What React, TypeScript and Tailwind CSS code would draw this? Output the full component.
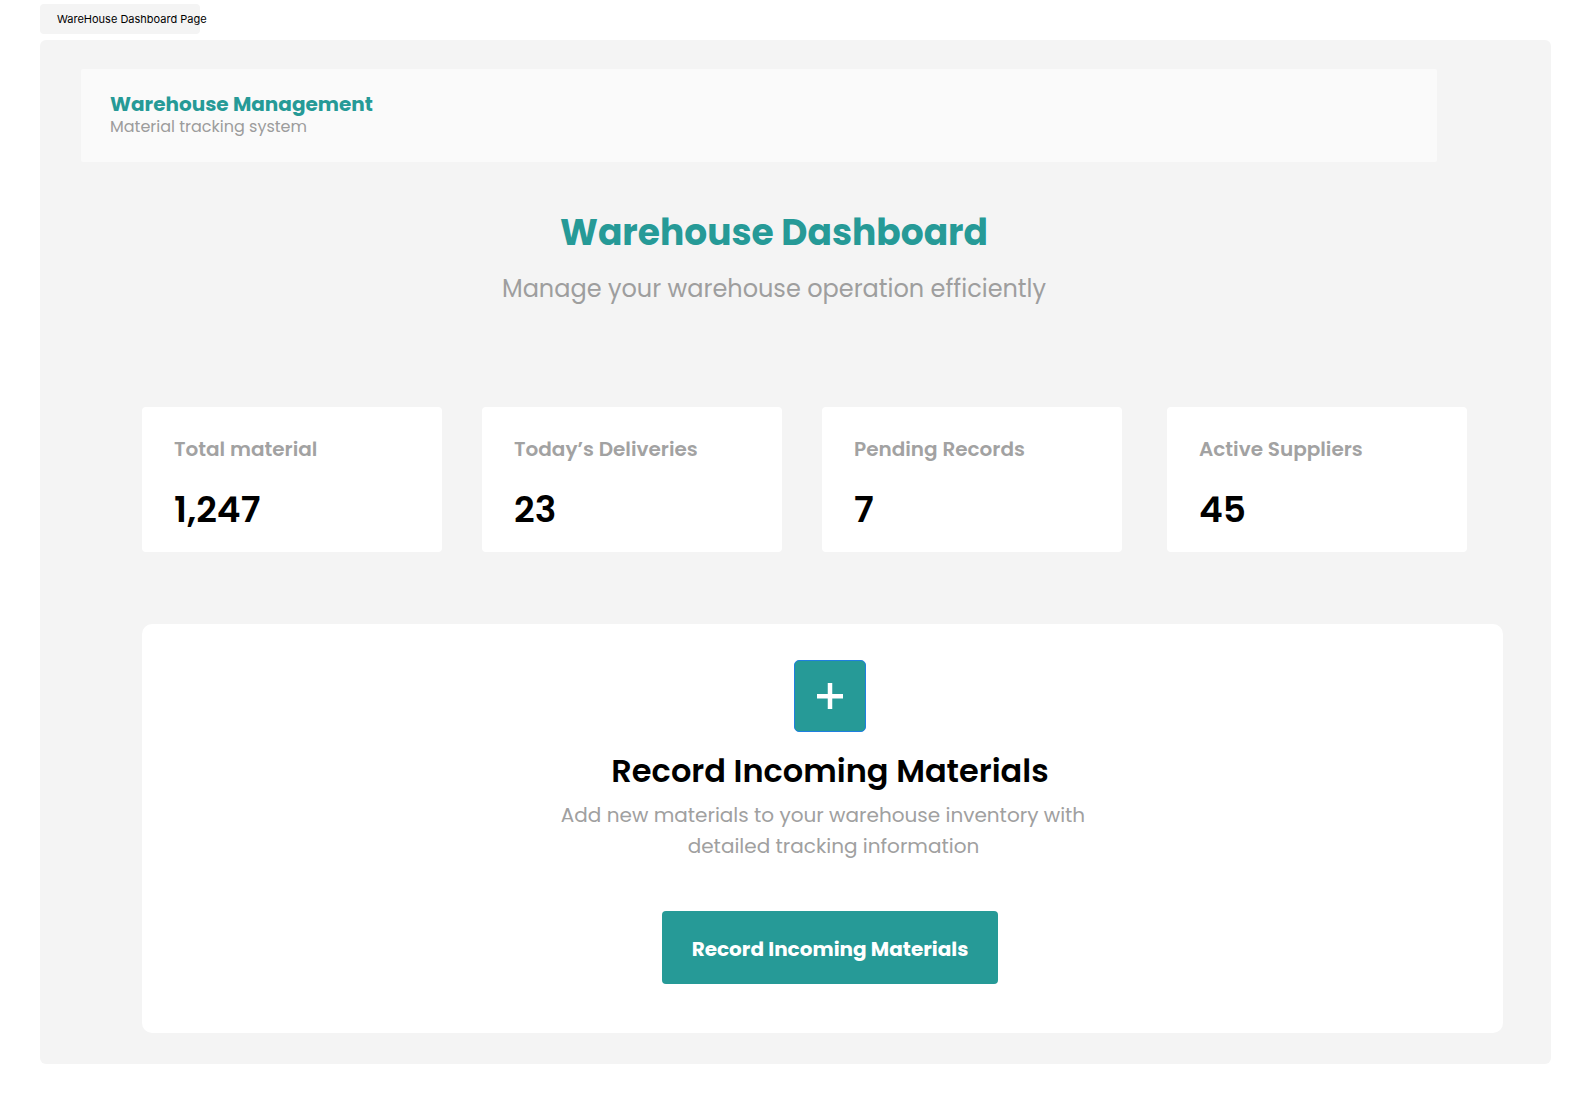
import React from "react";

const stats = [
  { label: "Total material", value: "1,247" },
  { label: "Today’s Deliveries", value: "23" },
  { label: "Pending Records", value: "7" },
  { label: "Active Suppliers", value: "45" },
];

export default function App() {
  return (
    <div className="min-h-screen bg-white font-['Poppins','Open_Sans',sans-serif]">
      <div className="pt-[4px] pl-[40px]">
        <div className="flex h-[30px] w-[160px] items-center whitespace-nowrap rounded-[4px] bg-[#f4f4f4] pl-[17px] font-['Inter',sans-serif] text-[11px] text-black">
          WareHouse Dashboard Page
        </div>
      </div>

      <div className="ml-[40px] mt-[6px] h-[1024px] w-[1511px] rounded-[6px] bg-[#f4f4f4] pl-[41px] pt-[29px]">
        <div className="h-[93px] w-[1356px] rounded-[2px] bg-[#fafafa] pl-[29px] pt-[23px]">
          <div className="text-[20px] font-bold leading-[24px] text-[#269a97]">Warehouse Management</div>
          <div className="text-[16px] leading-[22px] text-[#9c9c9c]">Material tracking system</div>
        </div>

        <div className="ml-[61px] mt-[44px] w-[1264px] text-center">
          <h1 className="text-[36px] font-bold leading-[54px] text-[#269a97]">Warehouse Dashboard</h1>
          <p className="mt-[11px] text-[24px] leading-[36px] text-[#9e9e9e]">
            Manage your warehouse operation efficiently
          </p>
        </div>

        <div className="ml-[61px] mt-[100px] flex">
          {stats.map((s, i) => (
            <div
              key={s.label}
              className={
                "h-[145px] w-[300px] rounded-[4px] bg-white pl-[32px] pt-[27px] " +
                (i === 0 ? "" : i === 3 ? "ml-[45px]" : "ml-[40px]")
              }
            >
              <div className="text-[20px] font-semibold leading-[30px] text-[#a2a2a2]">{s.label}</div>
              <div className="mt-[19px] text-[36px] font-semibold leading-[54px] text-black">{s.value}</div>
            </div>
          ))}
        </div>

        <div className="ml-[61px] mt-[72px] flex h-[409px] w-[1361px] flex-col items-center rounded-[10px] bg-white pl-[15px] pt-[36px]">
          <div className="flex h-[72px] w-[72px] items-center justify-center rounded-[5px] border border-[#1f7fe0] bg-[#269a97]">
            <svg width="26" height="26" viewBox="0 0 26 26">
              <rect x="0" y="11" width="26" height="4.5" fill="white" />
              <rect x="10.75" y="0" width="4.5" height="26" fill="white" />
            </svg>
          </div>
          <h2 className="mt-[15px] text-[32px] font-semibold leading-[48px] text-black">Record Incoming Materials</h2>
          <p className="mt-[5px] text-center text-[20px] leading-[31px] text-[#a0a0a0]">
            <span className="block pr-[14px]">Add new materials to your warehouse inventory with</span>
            <span className="block pl-[7px]">detailed tracking information</span>
          </p>
          <button className="mt-[49px] flex h-[73px] w-[336px] items-center justify-center rounded-[4px] bg-[#269a97] pt-[2px] text-[20px] font-bold text-white">
            Record Incoming Materials
          </button>
        </div>
      </div>
    </div>
  );
}
